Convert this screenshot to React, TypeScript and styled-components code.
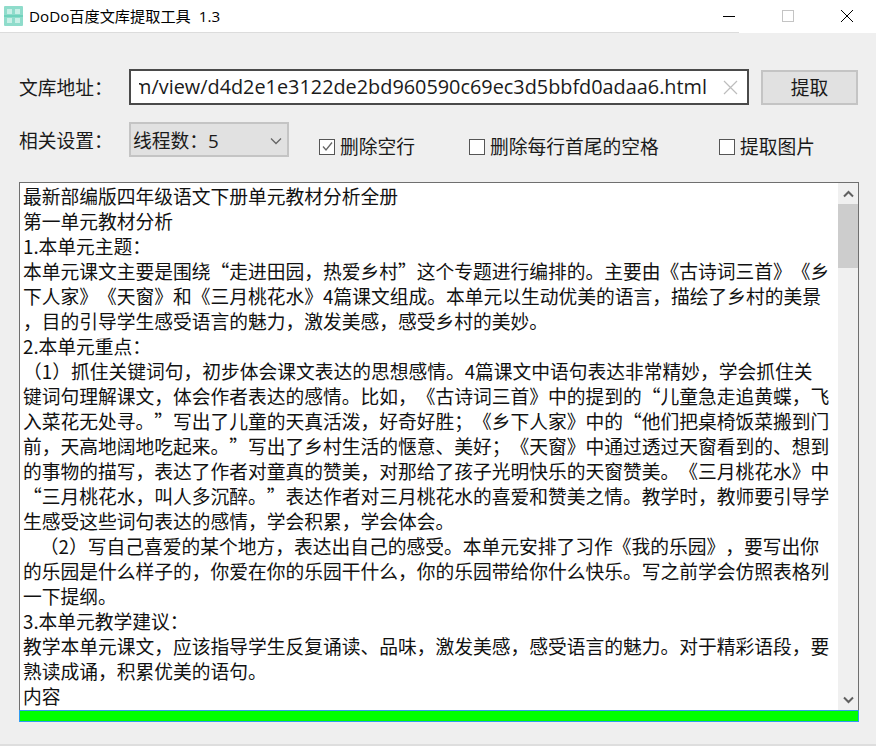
import React from 'react';
import styled, { createGlobalStyle } from 'styled-components';

const GlobalStyle = createGlobalStyle`
  html, body {
    margin: 0;
    padding: 0;
    background: #efefef;
  }
`

const uiFont = `"Open Sans", "Noto Sans CJK SC", sans-serif`
const bodyFont = `"Noto Sans CJK SC", "Open Sans", sans-serif`

const Window = styled.div`
  display: flex;
  flex-direction: column;
  width: 876px;
  height: 746px;
  overflow: hidden;
  background: #efefef;
  color: #1a1a1a;
  font-family: ${uiFont};
  box-sizing: border-box;
  border-bottom: 2px solid #dedede;
`

const TitleBar = styled.div`
  display: flex;
  flex-direction: row;
  height: 33px;
  background: #fff;
  flex-shrink: 0;
`

const TitleLeft = styled.div`
  flex: 1;
  display: flex;
  align-items: center;
  gap: 6px;
  padding-left: 4px;
  padding-bottom: 1px;
  border-bottom: 1px solid #dcdcdc;
`

const TitleText = styled.span`
  font-size: 15.2px;
  line-height: 30px;
  color: #000;
  white-space: pre;
`

const WindowControls = styled.div`
  display: flex;
  flex-direction: row;
  width: 176px;
  margin-left: -39px;
  flex-shrink: 0;
`

const ControlButton = styled.div`
  flex: 1;
  display: flex;
  align-items: center;
  justify-content: center;
  padding-bottom: 1px;
`

const Content = styled.div`
  flex: 1;
  display: flex;
  flex-direction: column;
  padding: 36px 17px 0 19px;
`

const AddressRow = styled.div`
  display: flex;
  flex-direction: row;
  align-items: center;
  height: 36px;
`

const SettingsRow = styled.div`
  display: flex;
  flex-direction: row;
  align-items: center;
  height: 34px;
  margin-top: 17px;
`

const FieldLabel = styled.span<{ $drop: number }>`
  width: 110px;
  flex-shrink: 0;
  font-size: 18.75px;
  line-height: 24px;
  white-space: pre;
  padding-top: ${(p) => p.$drop}px;
`

const AddressBox = styled.div`
  box-sizing: border-box;
  width: 620px;
  height: 36px;
  display: flex;
  flex-direction: row;
  align-items: center;
  background: #fff;
  border: 2px solid #4a4a4a;
  padding: 0 9px 0 8px;
  flex-shrink: 0;
`

const AddressText = styled.div`
  flex: 1;
  min-width: 0;
  overflow: hidden;
  display: flex;
  justify-content: flex-end;
  font-size: 19.85px;
  line-height: 30px;
  white-space: pre;
  margin-right: 16px;
`

const FetchButton = styled.div`
  box-sizing: border-box;
  width: 97px;
  height: 35px;
  margin-left: 12px;
  display: flex;
  align-items: center;
  justify-content: center;
  background: #e1e1e1;
  border: 2px solid #c4c4c4;
  font-size: 18.75px;
  line-height: 24px;
  padding-top: 2px;
`

const ThreadSelect = styled.div`
  box-sizing: border-box;
  width: 160px;
  height: 35px;
  display: flex;
  flex-direction: row;
  align-items: center;
  justify-content: space-between;
  background: #e1e1e1;
  border: 2px solid #c4c4c4;
  padding: 3px 5px 0 2px;
  font-size: 18.75px;
  line-height: 24px;
  flex-shrink: 0;
  white-space: pre;
`

const CheckLabel = styled.label<{ $width: number }>`
  display: flex;
  flex-direction: row;
  align-items: center;
  gap: 5px;
  width: ${(p) => p.$width}px;
  font-size: 18.75px;
  line-height: 24px;
  flex-shrink: 0;
  white-space: pre;
  padding-top: 15px;
`

const CheckBox = styled.span`
  box-sizing: border-box;
  width: 16px;
  height: 16px;
  display: flex;
  align-items: center;
  justify-content: center;
  background: #fff;
  border: 1.5px solid #555;
`

const CheckList = styled.div`
  display: flex;
  flex-direction: row;
  margin-left: 30px;
`

const TextPanel = styled.div`
  box-sizing: border-box;
  width: 840px;
  height: 528px;
  margin-top: 26px;
  display: flex;
  flex-direction: row;
  background: #fff;
  border: 1px solid #6f6f6f;
  border-bottom: none;
`

const TextBody = styled.div`
  flex: 1;
  min-width: 0;
  overflow: hidden;
  padding-left: 3px;
`

const TextLine = styled.div`
  font-family: ${bodyFont};
  font-size: 18.75px;
  line-height: 25px;
  height: 25px;
  white-space: pre;
  color: #111;
  font-kerning: none;
  text-spacing-trim: space-all;
`

const ScrollBar = styled.div`
  width: 20px;
  flex-shrink: 0;
  display: flex;
  flex-direction: column;
  background: #f0f0f0;
`

const ScrollArrow = styled.div`
  height: 21px;
  display: flex;
  align-items: center;
  justify-content: center;
  flex-shrink: 0;
`

const ScrollTrack = styled.div`
  flex: 1;
`

const ScrollThumb = styled.div`
  height: 64px;
  background: #cdcdcd;
`

const ProgressBar = styled.div`
  box-sizing: border-box;
  width: 840px;
  height: 12px;
  background: #00ff00;
  border: 1px solid #2f9bf0;
`

const lines = [
  '最新部编版四年级语文下册单元教材分析全册',
  '第一单元教材分析',
  '1.本单元主题：',
  '本单元课文主要是围绕“走进田园，热爱乡村”这个专题进行编排的。主要由《古诗词三首》《乡',
  '下人家》《天窗》和《三月桃花水》4篇课文组成。本单元以生动优美的语言，描绘了乡村的美景',
  '，目的引导学生感受语言的魅力，激发美感，感受乡村的美妙。',
  '2.本单元重点：',
  '（1）抓住关键词句，初步体会课文表达的思想感情。4篇课文中语句表达非常精妙，学会抓住关',
  '键词句理解课文，体会作者表达的感情。比如，《古诗词三首》中的提到的“儿童急走追黄蝶，飞',
  '入菜花无处寻。”写出了儿童的天真活泼，好奇好胜；《乡下人家》中的“他们把桌椅饭菜搬到门',
  '前，天高地阔地吃起来。”写出了乡村生活的惬意、美好；《天窗》中通过透过天窗看到的、想到',
  '的事物的描写，表达了作者对童真的赞美，对那给了孩子光明快乐的天窗赞美。《三月桃花水》中',
  '“三月桃花水，叫人多沉醉。”表达作者对三月桃花水的喜爱和赞美之情。教学时，教师要引导学',
  '生感受这些词句表达的感情，学会积累，学会体会。',
  '    （2）写自己喜爱的某个地方，表达出自己的感受。本单元安排了习作《我的乐园》，要写出你',
  '的乐园是什么样子的，你爱在你的乐园干什么，你的乐园带给你什么快乐。写之前学会仿照表格列',
  '一下提纲。',
  '3.本单元教学建议：',
  '教学本单元课文，应该指导学生反复诵读、品味，激发美感，感受语言的魅力。对于精彩语段，要',
  '熟读成诵，积累优美的语句。',
  '内容',
]

const AppIcon = () => (
  <svg width="19" height="20" viewBox="0 0 19 20">
    <rect x="0" y="0" width="19" height="20" rx="1" fill="#8fdccb" />
    <rect x="3" y="3" width="5" height="5" fill="#c9efe6" />
    <rect x="11" y="3" width="5" height="5" fill="#c9efe6" />
    <rect x="3" y="12" width="5" height="5" fill="#c9efe6" />
    <rect x="11" y="12" width="5" height="5" fill="#c9efe6" />
    <rect x="0" y="9" width="19" height="2" fill="#6fd2bc" />
  </svg>
)

export default function App() {
  return (
    <Window lang="zh-CN">
      <GlobalStyle />
      <TitleBar>
        <TitleLeft>
          <AppIcon />
          <TitleText>DoDo百度文库提取工具  1.3</TitleText>
        </TitleLeft>
        <WindowControls>
          <ControlButton>
            <svg width="14" height="14" viewBox="0 0 14 14"><path d="M1 7.5H13" stroke="#000" strokeWidth="1" /></svg>
          </ControlButton>
          <ControlButton>
            <svg width="14" height="14" viewBox="0 0 14 14"><rect x="1.5" y="1.5" width="11" height="11" fill="none" stroke="#c4c4c4" strokeWidth="1" /></svg>
          </ControlButton>
          <ControlButton>
            <svg width="14" height="14" viewBox="0 0 14 14"><path d="M1 1L13 13M13 1L1 13" stroke="#000" strokeWidth="1" /></svg>
          </ControlButton>
        </WindowControls>
      </TitleBar>
      <Content>
        <AddressRow>
          <FieldLabel $drop={2}>文库地址：</FieldLabel>
          <AddressBox>
            <AddressText>
              <span>om/view/d4d2e1e3122de2bd960590c69ec3d5bbfd0adaa6.html</span>
            </AddressText>
            <svg width="15" height="15" viewBox="0 0 15 15"><path d="M1 1L14 14M14 1L1 14" stroke="#bdbdbd" strokeWidth="1.2" /></svg>
          </AddressBox>
          <FetchButton>提取</FetchButton>
        </AddressRow>
        <SettingsRow>
          <FieldLabel $drop={4}>相关设置：</FieldLabel>
          <ThreadSelect>
            <span>线程数：5</span>
            <svg width="12" height="8" viewBox="0 0 12 8"><path d="M1 1.5L6 6.5L11 1.5" fill="none" stroke="#666" strokeWidth="1.3" /></svg>
          </ThreadSelect>
          <CheckList>
            <CheckLabel $width={150}>
              <CheckBox>
                <svg width="13" height="13" viewBox="0 0 13 13"><path d="M2 6.5L5 10L11 2.5" fill="none" stroke="#666" strokeWidth="1.3" /></svg>
              </CheckBox>
              删除空行
            </CheckLabel>
            <CheckLabel $width={250}>
              <CheckBox />
              删除每行首尾的空格
            </CheckLabel>
            <CheckLabel $width={100}>
              <CheckBox />
              提取图片
            </CheckLabel>
          </CheckList>
        </SettingsRow>
        <TextPanel>
          <TextBody>
            {lines.map((line, i) => (
              <TextLine key={i}>{line}</TextLine>
            ))}
          </TextBody>
          <ScrollBar>
            <ScrollArrow>
              <svg width="11" height="8" viewBox="0 0 11 8"><path d="M1 6.5L5.5 2L10 6.5" fill="none" stroke="#606060" strokeWidth="2" /></svg>
            </ScrollArrow>
            <ScrollThumb />
            <ScrollTrack />
            <ScrollArrow>
              <svg width="11" height="8" viewBox="0 0 11 8"><path d="M1 6.5L5.5 2L10 6.5" fill="none" stroke="#606060" strokeWidth="2" transform="rotate(180 5.5 4)" /></svg>
            </ScrollArrow>
          </ScrollBar>
        </TextPanel>
        <ProgressBar />
      </Content>
    </Window>
  )
}
